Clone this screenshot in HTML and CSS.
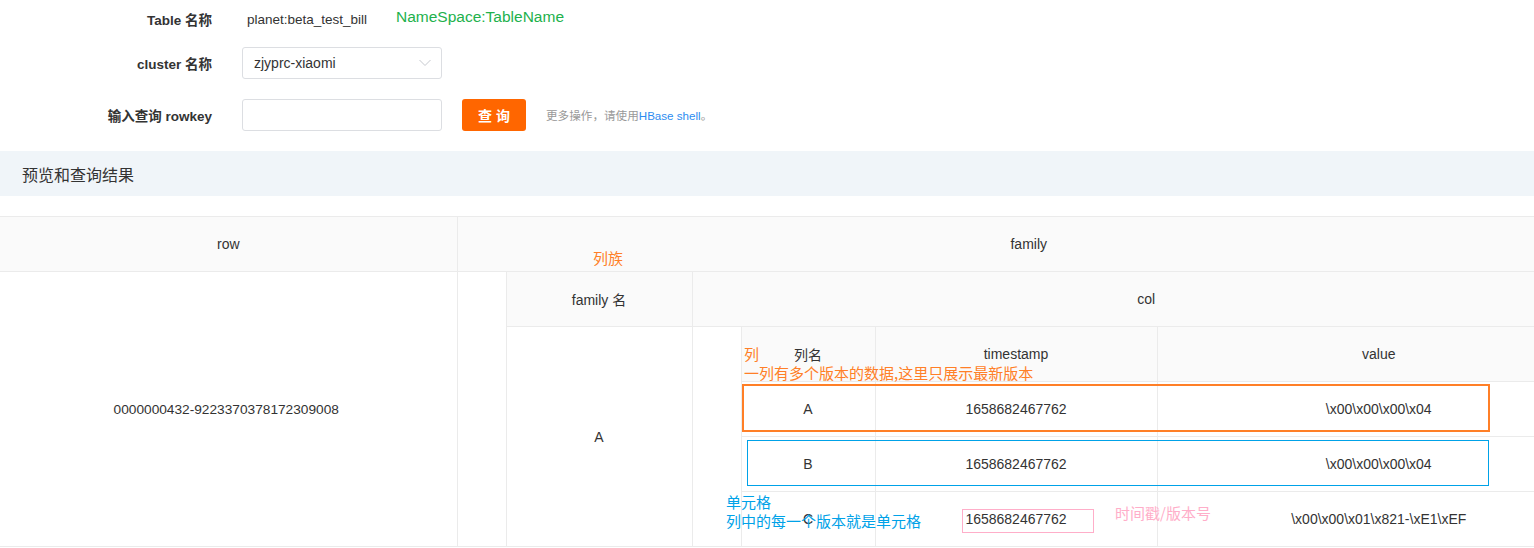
FILE: index.html
```html
<!DOCTYPE html>
<html lang="zh">
<head>
<meta charset="utf-8">
<title>HBase 查询</title>
<link rel="stylesheet" href="styles.css">
</head>
<body>
<div class="page">
  <form class="query">
    <div class="field field-info">
      <label class="field-label">Table 名称</label>
      <span class="field-text">planet:beta_test_bill</span>
    </div>
    <div class="field">
      <label class="field-label">cluster 名称</label>
      <div class="select">
        <span>zjyprc-xiaomi</span>
        <svg class="chevron" width="12" height="8" viewBox="0 0 12 8"><polyline points="0.5,1 6,6.5 11.5,1" fill="none" stroke="#c5c8ce" stroke-width="1"/></svg>
      </div>
    </div>
    <div class="field">
      <label class="field-label">输入查询 rowkey</label>
      <input class="input" type="text">
      <button class="btn" type="button">查 询</button>
      <span class="hint">更多操作，请使用<a class="hint-link">HBase shell</a>。</span>
    </div>
  </form>

  <div class="band">预览和查询结果</div>

  <div class="table-wrap">
    <table class="grid outer">
      <colgroup><col style="width:457px"><col></colgroup>
      <tr><th>row</th><th>family</th></tr>
      <tr>
        <td class="row-key">0000000432-9223370378172309008</td>
        <td class="nest-cell">
          <table class="grid inner">
            <colgroup><col style="width:186px"><col></colgroup>
            <tr><th>family 名</th><th>col</th></tr>
            <tr>
              <td>A</td>
              <td class="nest-cell">
                <table class="grid inner">
                  <colgroup><col style="width:134px"><col style="width:282px"><col></colgroup>
                  <tr><th>列名</th><th>timestamp</th><th>value</th></tr>
                  <tr><td>A</td><td>1658682467762</td><td>\x00\x00\x00\x04</td></tr>
                  <tr><td>B</td><td>1658682467762</td><td>\x00\x00\x00\x04</td></tr>
                  <tr><td>C</td><td>1658682467762</td><td>\x00\x00\x01\x821-\xE1\xEF</td></tr>
                </table>
              </td>
            </tr>
          </table>
        </td>
      </tr>
    </table>
  </div>

  <div class="note note-ns">NameSpace:TableName</div>
  <div class="note note-orange note-family">列族</div>
  <div class="note note-orange note-col">列<br>一列有多个版本的数据,这里只展示最新版本</div>
  <div class="note note-blue note-cell">单元格<br>列中的每一个版本就是单元格</div>
  <div class="note note-pink note-ts">时间戳/版本号</div>
  <div class="box box-orange"></div>
  <div class="box box-blue"></div>
  <div class="box box-pink"></div>
</div>
</body>
</html>
```

FILE: styles.css
```css
html, body {
  margin: 0;
  padding: 0;
  overflow: hidden;
  background: #fff;
}
body {
  font-family: "Liberation Sans", "Noto Sans CJK SC", sans-serif;
  font-size: 14px;
  color: #333;
}
.page {
  position: relative;
  width: 1534px;
  height: 548px;
  overflow: hidden;
}

/* form */
.query {
  display: flex;
  flex-direction: column;
  padding-top: 3px;
  margin: 0;
}
.field {
  display: flex;
  align-items: center;
  height: 32px;
  margin-bottom: 20px;
}
.field-info {
  margin-bottom: 12px;
}
.field-label {
  width: 212px;
  margin-right: 30px;
  text-align: right;
  font-weight: bold;
  font-size: 13.5px;
  color: #333;
}
.field-text {
  margin-left: 5px;
  font-size: 13.5px;
  color: #333;
}
.select {
  box-sizing: border-box;
  width: 200px;
  height: 32px;
  border: 1px solid #dcdee2;
  border-radius: 3px;
  display: flex;
  align-items: center;
  justify-content: space-between;
  padding: 0 10px 0 11px;
  font-size: 14px;
  color: #333;
}
.chevron {
  display: block;
}
.input {
  box-sizing: border-box;
  width: 200px;
  height: 32px;
  border: 1px solid #dcdee2;
  border-radius: 3px;
  margin: 0;
  padding: 0 8px;
  outline: none;
}
.btn {
  margin-left: 20px;
  width: 64px;
  height: 32px;
  border: 0;
  border-radius: 3px;
  background: #ff6600;
  color: #fff;
  font-family: "Liberation Sans", "Noto Sans CJK SC", sans-serif;
  font-size: 14px;
  font-weight: bold;
  padding: 0;
}
.hint {
  margin-left: 20px;
  font-size: 11.6px;
  color: #999;
}
.hint-link {
  color: #2d8cf0;
}

/* band */
.band {
  height: 45px;
  background: #f0f5f9;
  display: flex;
  align-items: center;
  padding-left: 22px;
  font-size: 16px;
  color: #333;
}

/* tables */
.table-wrap {
  margin-top: 20px;
  width: 1534px;
  overflow: hidden;
}
.grid {
  border-collapse: collapse;
  table-layout: fixed;
}
.outer {
  width: 1601px;
}
.inner {
  width: 100%;
}
.grid th,
.grid td {
  border: 1px solid #ebebeb;
  padding: 0;
  text-align: center;
  vertical-align: middle;
  font-weight: normal;
  font-size: 14px;
  color: #333;
  height: 54px;
}
.grid th {
  background: #fafafa;
}
.grid td.row-key {
  font-size: 13.7px;
  padding-right: 4px;
}
.outer > tbody > tr > :first-child {
  border-left: none;
}
.grid td.nest-cell {
  padding: 0 0 0 48px;
  vertical-align: top;
  height: auto;
}
.inner tr:first-child > th,
.inner tr:first-child > td {
  border-top: none;
}
.inner tr:last-child > td {
  border-bottom: none;
}
.inner tr > :last-child {
  border-right: none;
}

/* annotations */
.note {
  position: absolute;
  font-family: "Noto Sans CJK SC", sans-serif;
  font-size: 15px;
  line-height: 19px;
  white-space: nowrap;
}
.note-ns {
  left: 396px;
  top: 7px;
  line-height: 20px;
  font-family: "Liberation Sans", "Noto Sans CJK SC", sans-serif;
  font-size: 15.5px;
  color: #22b14c;
}
.note-orange { color: #ff7f27; }
.note-blue { color: #00a2e8; }
.note-pink { color: #ffaec9; }
.note-family {
  left: 593px;
  top: 248px;
}
.note-col {
  left: 744px;
  top: 344px;
}
.note-cell {
  left: 726px;
  top: 492px;
}
.note-ts {
  left: 1115px;
  top: 503px;
}
.box {
  position: absolute;
  box-sizing: border-box;
}
.box-orange {
  left: 742px;
  top: 384px;
  width: 748px;
  height: 48px;
  border: 2px solid #ff7f27;
}
.box-blue {
  left: 747px;
  top: 440px;
  width: 742px;
  height: 46px;
  border: 1px solid #00a2e8;
}
.box-pink {
  left: 962px;
  top: 509px;
  width: 132px;
  height: 24px;
  border: 1px solid #ffaec9;
}
```
